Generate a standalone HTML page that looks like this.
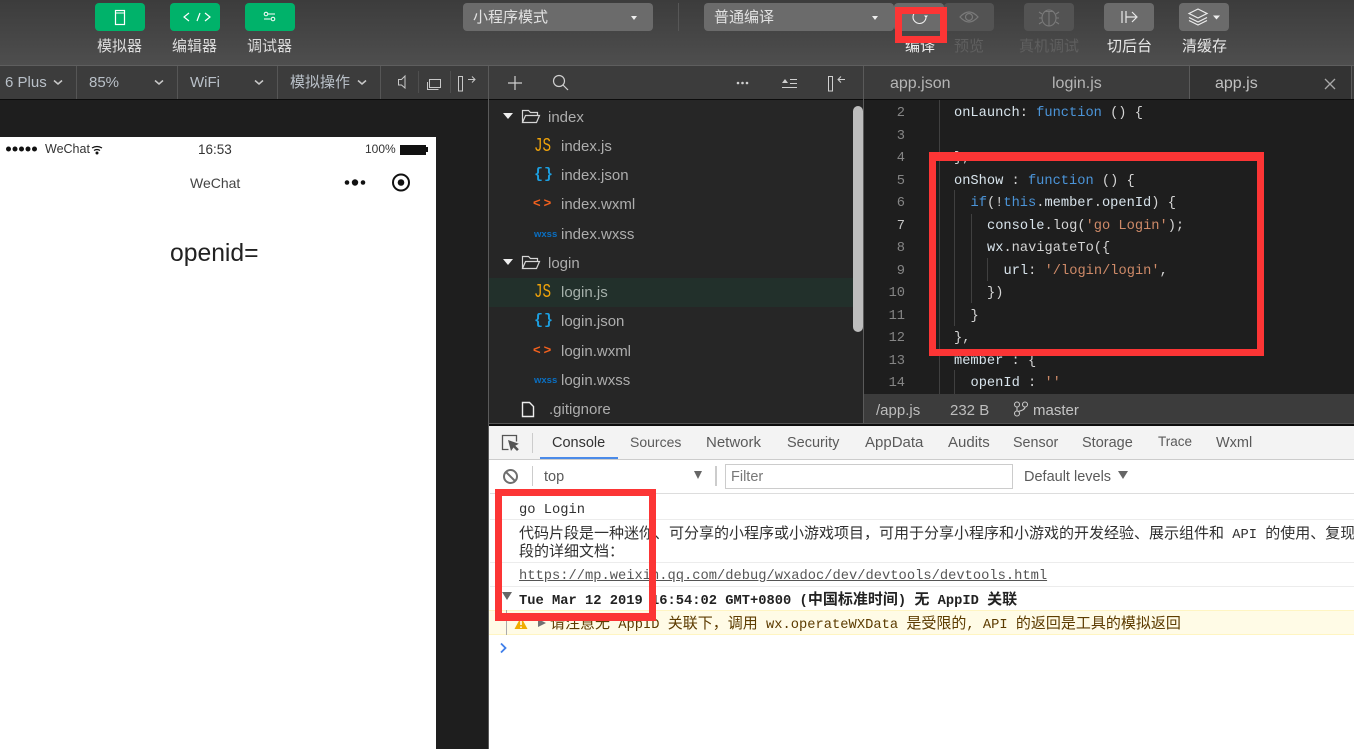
<!DOCTYPE html>
<html><head><meta charset="utf-8"><style>
html,body{margin:0;padding:0;width:1354px;height:749px;overflow:hidden;background:#1e1e1e}
body{position:relative;font-family:"Liberation Sans","Noto Sans CJK SC",sans-serif}
.a{position:absolute}
.t{position:absolute;white-space:nowrap;line-height:20px;height:20px}
.g{background:#00b26a;border-radius:4px;width:50px;height:28px;top:3px}
.b{border-radius:4px;height:28px;top:3px;background:#6b6b6b}
.l{font-size:15px;color:#dcdcdc}
.tb{font-size:15px;color:#b9c0c8}
.tr{font-size:15px;color:#adadad}
.c{font-family:"Liberation Mono","Noto Sans CJK SC",monospace;font-size:13.7px;color:#d4d4d4}
.n{font-family:"Liberation Mono",monospace;font-size:13.7px;color:#858585;width:30px;text-align:right;left:875px}
.k{color:#4b94d8}.s{color:#ce8a68}.w{color:#d8e4ec}
.d{font-size:15px;color:#5f5f5f}
.m{font-family:"Liberation Mono","Noto Sans CJK SC",monospace;font-size:13.75px;color:#303030}
.z{font-size:15px}
.gd{position:absolute;width:1px;background:#404040}
.r{position:absolute;border-style:solid;border-color:#fc3535;box-sizing:border-box;z-index:20}
.ln{position:absolute;height:1px;background:#ececec;left:490px;width:864px}
.js{font-size:19px;color:#f0a30a;font-family:'Liberation Mono',monospace;transform:scaleX(.75);transform-origin:left center}
</style></head><body>

<div class="a" style="left:0;top:0;width:1354px;height:65px;background:linear-gradient(#3c3c3c,#4e4e4e)"></div>
<div class="a" style="left:0;top:65px;width:1354px;height:1px;background:#5e5e5e"></div>
<div class="a" style="left:0;top:66px;width:1354px;height:33px;background:#3c3c3c"></div>
<div class="a" style="left:0;top:99px;width:1354px;height:1px;background:#0c0c0c"></div>

<div class="a g" style="left:95px"></div><div class="a g" style="left:170px"></div><div class="a g" style="left:245px"></div>
<svg class="a" style="left:95px;top:3px" width="200" height="28" fill="none" stroke="#fff">
<rect x="20.500" y="7.500" width="9" height="14" stroke-width="1.200"/><path d="M21 10h8" stroke-width="1"/>
<path d="M94 10l-5 4 5 4M102 18l3-8M110 10l5 4-5 4" stroke-width="1.200"/>
<path d="M173 11h7M169 16h6.500" stroke-width="1"/><circle cx="171" cy="11" r="1.800" stroke-width="1"/><circle cx="178" cy="16" r="1.800" stroke-width="1"/>
</svg>
<div class="t l" style="left:97px;top:37px">模拟器</div>
<div class="t l" style="left:172px;top:37px">编辑器</div>
<div class="t l" style="left:247px;top:37px">调试器</div>

<div class="a b" style="left:463px;width:190px"></div>
<div class="t l" style="left:473px;top:8px;color:#e2e2e2">小程序模式</div>
<div class="a" style="left:631px;top:16px;border:3.500px solid transparent;border-top:4px solid #eee;border-bottom:0"></div>
<div class="a" style="left:678px;top:3px;width:1px;height:28px;background:#575757"></div>
<div class="a b" style="left:704px;width:190px"></div>
<div class="t l" style="left:714px;top:8px;color:#e2e2e2">普通编译</div>
<div class="a" style="left:872px;top:16px;border:3.500px solid transparent;border-top:4px solid #eee;border-bottom:0"></div>
<div class="a b" style="left:894px;width:50px;background:#6b6b6b"></div>
<svg class="a" style="left:905px;top:6px" width="30" height="22" fill="none" stroke="#f0f0f0" stroke-width="1.100"><path d="M14.500 4.500a6.500 6.500 0 1 0 6.500 7"/><path d="M19 9.500h4l-2 2.500z" fill="#f0f0f0" stroke="none"/></svg>
<div class="t l" style="left:905px;top:37px;color:#eee">编译</div>

<div class="a b" style="left:944px;width:50px;background:#535353"></div>
<svg class="a" style="left:944px;top:3px" width="50" height="28" fill="none" stroke="#7a7a7a" stroke-width="1.200"><path d="M16 14q9-10 18 0q-9 10-18 0z"/><circle cx="25" cy="14" r="3.500"/></svg>
<div class="t d" style="left:954px;top:37px">预览</div>
<div class="a b" style="left:1024px;width:50px;background:#535353"></div>
<svg class="a" style="left:1024px;top:3px" width="50" height="28" fill="none" stroke="#7a7a7a" stroke-width="1.100"><ellipse cx="25" cy="15" rx="7" ry="8"/><path d="M20.500 8.500h9M25 8v15M18 11l-3-2M32 11l3-2M18 15h-3M32 15h3M18 19l-3 2M32 19l3 2"/></svg>
<div class="t d" style="left:1019px;top:37px">真机调试</div>
<div class="a b" style="left:1104px;width:50px"></div>
<svg class="a" style="left:1104px;top:3px" width="50" height="28" fill="none" stroke="#e8e8e8" stroke-width="1.200"><path d="M18 8v12M22 8v12M22 14h10M28 9l5 5-5 5"/></svg>
<div class="t l" style="left:1107px;top:37px;color:#e8e8e8">切后台</div>
<div class="a b" style="left:1179px;width:50px"></div>
<svg class="a" style="left:1179px;top:3px" width="50" height="28" fill="none" stroke="#eee" stroke-width="1.200"><path d="M10 10.500l9-4.500 9 4.500-9 4.500zM10 14.500l9 4.500 9-4.500M10 17.500l9 4.500 9-4.500"/><path d="M34 12.500h7l-3.500 4z" fill="#eee" stroke="none"/></svg>
<div class="t l" style="left:1182px;top:37px;color:#e8e8e8">清缓存</div>

<!-- second toolbar -->
<div class="t tb" style="left:5px;top:73px">6 Plus</div>
<div class="t tb" style="left:89px;top:73px">85%</div>
<div class="t tb" style="left:190px;top:73px">WiFi</div>
<div class="t tb" style="left:290px;top:73px">模拟操作</div>
<svg class="a" style="left:0;top:66px" width="490" height="33" fill="none" stroke="#c8c8c8" stroke-width="1.500">
<path d="M54 14.500l4 3.500 4-3.500M155 14.500l4 3.500 4-3.500M255 14.500l4 3.500 4-3.500M358 14.500l4 3.500 4-3.500"/>
<g stroke-width="1"><path d="M398.500 13.500h3l3.500-3.500v12l-3.500-3h-3z"/><rect x="429.500" y="13.500" width="11" height="8"/><path d="M427.500 16v7.500h11"/><rect x="458.500" y="10.500" width="4" height="14.500"/><path d="M468 13.500h7M472 10.500l3 3-3 3"/></g>
</svg>
<div class="a" style="left:76px;top:66px;width:1px;height:33px;background:#565656"></div>
<div class="a" style="left:177px;top:66px;width:1px;height:33px;background:#565656"></div>
<div class="a" style="left:277px;top:66px;width:1px;height:33px;background:#565656"></div>
<div class="a" style="left:380px;top:66px;width:1px;height:33px;background:#565656"></div>
<div class="a" style="left:418px;top:71px;width:1px;height:22px;background:#4f4f4f"></div>
<div class="a" style="left:450px;top:71px;width:1px;height:22px;background:#4f4f4f"></div>
<div class="a" style="left:488px;top:66px;width:1px;height:683px;background:#5a5a5a"></div>

<svg class="a" style="left:500px;top:66px" width="360" height="33" fill="none" stroke="#d0d0d0" stroke-width="1.200">
<path d="M15 10v14M8 17h14"/><circle cx="59" cy="15" r="5.500"/><path d="M63 19l5 5"/>
<g fill="#d0d0d0" stroke="none"><circle cx="238" cy="17" r="1.300"/><circle cx="242.500" cy="17" r="1.300"/><circle cx="247" cy="17" r="1.300"/><path d="M282 17l3-4 3 4z"/></g>
<path d="M282 21.500h15M290 13.500h7M290 17.500h7" stroke-width="1"/>
<g stroke-width="1"><rect x="328.500" y="10.500" width="4" height="14.500"/><path d="M345 13.500h-7M341 10.500l-3 3 3 3"/></g>
</svg>
<div class="a" style="left:863px;top:66px;width:1px;height:358px;background:#5a5a5a"></div>

<!-- tabs -->
<div class="a" style="left:864px;top:66px;width:325px;height:33px;background:#3c3c3c"></div>
<div class="a" style="left:1189px;top:66px;width:1px;height:33px;background:#5a5a5a"></div>
<div class="a" style="left:1190px;top:66px;width:161px;height:33px;background:#333"></div>
<div class="a" style="left:1351px;top:66px;width:1px;height:33px;background:#5a5a5a"></div>
<div class="a" style="left:1352px;top:66px;width:2px;height:33px;background:#3c3c3c"></div>
<div class="t" style="left:890px;top:74px;font-size:16px;color:#b5b5b5">app.json</div>
<div class="t" style="left:1052px;top:74px;font-size:16px;color:#b5b5b5">login.js</div>
<div class="t" style="left:1215px;top:74px;font-size:16px;color:#c0c0c0">app.js</div>
<svg class="a" style="left:1323px;top:77px" width="14" height="14" stroke="#a8a8a8" stroke-width="1.300"><path d="M2 2l10 10M12 2L2 12"/></svg>

<!-- phone -->
<div class="a" style="left:0;top:137px;width:436px;height:612px;background:#fff"></div>
<svg class="a" style="left:5px;top:143px" width="100" height="14"><g fill="#111"><circle cx="3.500" cy="6" r="2.500"/><circle cx="10" cy="6" r="2.500"/><circle cx="16.500" cy="6" r="2.500"/><circle cx="23" cy="6" r="2.500"/><circle cx="29.500" cy="6" r="2.500"/><circle cx="92" cy="10" r="1.500"/></g><path d="M87 5q5-3 10 0M89 7.500q3-2 6 0" fill="none" stroke="#111" stroke-width="1.300"/></svg>
<div class="t" style="left:45px;top:139px;font-size:12.500px;color:#333">WeChat</div>
<div class="t" style="left:198px;top:140px;font-size:13.500px;color:#333">16:53</div>
<div class="t" style="left:365px;top:139px;font-size:12px;color:#333">100%</div>
<div class="a" style="left:400px;top:145px;width:24px;height:8px;border:1px solid #111;background:#111"></div>
<div class="a" style="left:426px;top:147px;width:2px;height:5px;background:#111"></div>
<div class="t" style="left:190px;top:173px;font-size:14px;color:#444">WeChat</div>
<svg class="a" style="left:342px;top:172px" width="70" height="22"><g fill="#111"><circle cx="5" cy="10.500" r="2.300"/><circle cx="13" cy="10.500" r="3.200"/><circle cx="21" cy="10.500" r="2.300"/><circle cx="59" cy="10.500" r="3.300"/></g><circle cx="59" cy="10.500" r="8" fill="none" stroke="#111" stroke-width="2"/></svg>
<div class="t" style="left:170px;top:244px;font-size:24.700px;color:#222">openid=</div>

<!-- tree -->
<div class="a" style="left:489px;top:100px;width:374px;height:324px;background:#262626"></div>
<div class="a" style="left:489px;top:278px;width:364px;height:29px;background:#22302b"></div>
<div class="a" style="left:853px;top:106px;width:10px;height:226px;background:#bdbdbd;border-radius:5px"></div>
<svg class="a" style="left:489px;top:100px" width="140" height="324" fill="none">
<g fill="#eee"><path d="M14 13h10l-5 6zM14 159h10l-5 6z"/></g>
<g stroke="#d5d5d5" stroke-width="1.200"><path d="M33.500 22.500v-12h6l2 2h7v3M33.500 22.500h14l3-7h-14zM33.500 168.500v-12h6l2 2h7v3M33.500 168.500h14l3-7h-14z"/></g>
<path d="M33.500 316.500h11v-10l-4-4h-7z" stroke="#eee" stroke-width="1.400"/>
</svg>
<div class="t tr" style="left:548px;top:108px">index</div>
<div class="t tr" style="left:561px;top:137px">index.js</div>
<div class="t tr" style="left:561px;top:166px">index.json</div>
<div class="t tr" style="left:561px;top:195px">index.wxml</div>
<div class="t tr" style="left:561px;top:225px">index.wxss</div>
<div class="t tr" style="left:548px;top:254px">login</div>
<div class="t tr" style="left:561px;top:283px;color:#a6b0ab">login.js</div>
<div class="t tr" style="left:561px;top:312px">login.json</div>
<div class="t tr" style="left:561px;top:342px">login.wxml</div>
<div class="t tr" style="left:561px;top:371px">login.wxss</div>
<div class="t tr" style="left:549px;top:400px">.gitignore</div>
<div class="t js" style="left:534px;top:136px">JS</div>
<div class="t js" style="left:534px;top:282px">JS</div>
<div class="t" style="left:534px;top:165px;font-size:15px;font-weight:bold;color:#1c9fe0;font-family:'Liberation Mono',monospace;letter-spacing:1px">{}</div>
<div class="t" style="left:534px;top:311px;font-size:15px;font-weight:bold;color:#1c9fe0;font-family:'Liberation Mono',monospace;letter-spacing:1px">{}</div>
<div class="t" style="left:533px;top:193px;font-size:13px;font-weight:bold;color:#f4611e;letter-spacing:3px">&lt;&gt;</div>
<div class="t" style="left:533px;top:340px;font-size:13px;font-weight:bold;color:#f4611e;letter-spacing:3px">&lt;&gt;</div>
<div class="t" style="left:534px;top:225px;font-size:9.500px;color:#0a6fc2;font-weight:bold">wxss</div>
<div class="t" style="left:534px;top:371px;font-size:9.500px;color:#0a6fc2;font-weight:bold">wxss</div>

<!-- editor -->
<div class="a" style="left:864px;top:100px;width:490px;height:294px;background:#1e1e1e"></div>
<div class="gd" style="left:939px;top:100px;height:294px"></div>
<div class="gd" style="left:954px;top:190px;height:136px"></div>
<div class="gd" style="left:954px;top:370px;height:24px"></div>
<div class="gd" style="left:971px;top:214px;height:89px"></div>
<div class="gd" style="left:987px;top:258px;height:23px"></div>
<div class="t n" style="top:104px">2</div><div class="t n" style="top:127px">3</div><div class="t n" style="top:149px">4</div><div class="t n" style="top:172px">5</div><div class="t n" style="top:194px">6</div><div class="t n" style="top:217px;color:#c6c6c6">7</div><div class="t n" style="top:239px">8</div><div class="t n" style="top:262px">9</div><div class="t n" style="top:284px">10</div><div class="t n" style="top:307px">11</div><div class="t n" style="top:329px">12</div><div class="t n" style="top:352px">13</div><div class="t n" style="top:374px">14</div>
<div class="t c" style="left:954px;top:104px"><span class="w">onLaunch</span>: <span class="k">function</span> () {</div>
<div class="t c" style="left:954px;top:149px">},</div>
<div class="t c" style="left:954px;top:172px"><span class="w">onShow</span> : <span class="k">function</span> () {</div>
<div class="t c" style="left:970.500px;top:194px"><span class="k">if</span>(!<span class="k">this</span>.<span class="w">member</span>.<span class="w">openId</span>) {</div>
<div class="t c" style="left:987px;top:217px"><span class="w">console</span>.log(<span class="s">'go Login'</span>);</div>
<div class="t c" style="left:987px;top:239px"><span class="w">wx</span>.navigateTo({</div>
<div class="t c" style="left:1003.500px;top:262px"><span class="w">url</span>: <span class="s">'/login/login'</span>,</div>
<div class="t c" style="left:987px;top:284px">})</div>
<div class="t c" style="left:970.500px;top:307px">}</div>
<div class="t c" style="left:954px;top:329px">},</div>
<div class="t c" style="left:954px;top:352px"><span class="w">member</span> :  {</div>
<div class="t c" style="left:970.500px;top:374px"><span class="w">openId</span> : <span class="s">''</span></div>

<!-- status -->
<div class="a" style="left:864px;top:394px;width:490px;height:30px;background:#3c3c3c"></div>
<div class="t tr" style="left:876px;top:401px;color:#bdbdbd">/app.js</div>
<div class="t tr" style="left:950px;top:401px;color:#bdbdbd">232 B</div>
<svg class="a" style="left:1013px;top:401px" width="16" height="16" fill="none" stroke="#c8c8c8" stroke-width="1.100"><circle cx="4" cy="3.500" r="2.500"/><circle cx="4" cy="12.500" r="2.500"/><circle cx="12" cy="3.500" r="2.500"/><path d="M4 6v4M12 6q0 3-7 4.500"/></svg>
<div class="t tr" style="left:1033px;top:401px;color:#c4c4c4">master</div>
<div class="a" style="left:489px;top:423px;width:865px;height:1px;background:#555"></div>
<div class="a" style="left:489px;top:424px;width:865px;height:2px;background:#0c0c0c"></div>

<!-- console -->
<div class="a" style="left:489px;top:426px;width:865px;height:323px;background:#fff"></div>
<div class="a" style="left:489px;top:426px;width:865px;height:33px;background:#f3f3f3;border-bottom:1px solid #ccc"></div>
<div class="a" style="left:540px;top:457px;width:78px;height:2px;background:#4a8ae8"></div>
<div class="a" style="left:532px;top:433px;width:1px;height:20px;background:#ccc"></div>
<svg class="a" style="left:500px;top:433px" width="22" height="22" fill="none"><path d="M8.500 16.500h-6v-14h14v6" stroke="#555" stroke-width="1.300"/><path d="M8 7l3 11 2.500-3.500 3.500 3.500 1.800-1.800-3.500-3.500 3.500-2z" fill="#555"/></svg>
<div class="t" style="left:552px;top:433px;font-size:14.500px;color:#333">Console</div>
<div class="t" style="left:630px;top:432px;font-size:14px;color:#5a5a5a">Sources</div>
<div class="t" style="left:706px;top:433px;font-size:15px;color:#5a5a5a">Network</div>
<div class="t" style="left:787px;top:433px;font-size:14.500px;color:#5a5a5a">Security</div>
<div class="t" style="left:865px;top:433px;font-size:15px;color:#5a5a5a">AppData</div>
<div class="t" style="left:948px;top:433px;font-size:15px;color:#5a5a5a">Audits</div>
<div class="t" style="left:1013px;top:433px;font-size:14.300px;color:#5a5a5a">Sensor</div>
<div class="t" style="left:1082px;top:433px;font-size:14.500px;color:#5a5a5a">Storage</div>
<div class="t" style="left:1158px;top:432px;font-size:13.500px;color:#5a5a5a">Trace</div>
<div class="t" style="left:1216px;top:433px;font-size:14.500px;color:#5a5a5a">Wxml</div>

<svg class="a" style="left:502px;top:468px" width="17" height="17" fill="none" stroke="#6e6e6e" stroke-width="2"><circle cx="8.500" cy="8.500" r="6.500"/><path d="M4 4l9 9"/></svg>
<div class="a" style="left:532px;top:466px;width:1px;height:20px;background:#ccc"></div>
<div class="t" style="left:544px;top:467px;font-size:14.500px;color:#5a5a5a">top</div>
<div class="a" style="left:694px;top:471px;border:4.500px solid transparent;border-top:8px solid #666;border-bottom:0"></div>
<div class="a" style="left:715px;top:466px;width:2px;height:20px;background:#ccc"></div>
<div class="a" style="left:725px;top:464px;width:288px;height:25px;border:1px solid #ccc;box-sizing:border-box"></div>
<div class="t" style="left:731px;top:467px;font-size:14.500px;color:#777">Filter</div>
<div class="t" style="left:1024px;top:467px;font-size:14.500px;color:#5a5a5a">Default levels</div>
<div class="a" style="left:1118px;top:471px;border:5px solid transparent;border-top:8px solid #666;border-bottom:0"></div>
<div class="ln" style="top:493px;background:#ddd"></div>
<div class="ln" style="top:519px"></div>
<div class="ln" style="top:562px"></div>
<div class="ln" style="top:586px"></div>

<div class="t m" style="left:519px;top:501px">go Login</div>
<div class="t m" style="left:519px;top:525px;width:835px;overflow:hidden"><span class="z">代码片段是一种迷你、可分享的小程序或小游戏项目，可用于分享小程序和小游戏的开发经验、展示组件和</span> API <span class="z">的使用、复现</span></div>
<div class="t m" style="left:519px;top:543px"><span class="z">段的详细文档：</span></div>
<div class="t m" style="left:519px;top:567px;text-decoration:underline;color:#555">https://mp.weixin.qq.com/debug/wxadoc/dev/devtools/devtools.html</div>
<div class="a" style="left:502px;top:592px;border:5px solid transparent;border-top:8px solid #666;border-bottom:0"></div>
<div class="t m" style="left:519px;top:591px;font-weight:bold;color:#222">Tue Mar 12 2019 16:54:02 GMT+0800 (<span class="z">中国标准时间</span>) <span class="z">无</span> AppID <span class="z">关联</span></div>
<div class="a" style="left:489px;top:610px;width:865px;height:25px;box-sizing:border-box;background:#fffbe6;border-top:1px solid #fff5c2;border-bottom:1px solid #fff5c2"></div>
<div class="a" style="left:506px;top:610px;width:1px;height:25px;background:#aaa"></div>
<svg class="a" style="left:514px;top:616px" width="14" height="14"><path d="M7 1l6.500 12H.5z" fill="#f0ab00"/><path d="M7 5v4M7 10.500v1.500" stroke="#fff" stroke-width="1.500"/></svg>
<div class="a" style="left:538px;top:619px;border:4.500px solid transparent;border-left:8px solid #727272;border-right:0"></div>
<div class="t m" style="left:550px;top:615px;color:#5c3b00"><span class="z">请注意无</span> AppID <span class="z">关联下，调用</span> wx.operateWXData <span class="z">是受限的</span>, API <span class="z">的返回是工具的模拟返回</span></div>
<svg class="a" style="left:499px;top:642px" width="10" height="12" fill="none" stroke="#3f7fea" stroke-width="1.800"><path d="M2 1.500l4.500 4.500L2 10.500"/></svg>

<!-- red annotation boxes -->
<div class="r" style="left:895px;top:7px;width:52px;height:36px;border-width:7px"></div>
<div class="r" style="left:929px;top:152px;width:335px;height:204px;border-width:9px 7px 7px 7px"></div>
<div class="r" style="left:495px;top:489px;width:161px;height:132px;border-width:7px 7px 8px 7px"></div>
</body></html>
